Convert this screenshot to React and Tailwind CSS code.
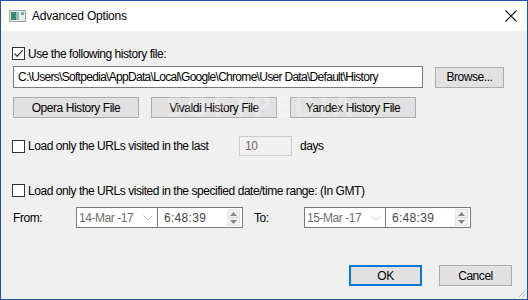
import React from 'react';

const font = { fontFamily: '"Liberation Sans", Arial, sans-serif' };

function Check({ checked }) {
  return (
    <span className="w-[13px] h-[13px] border border-[#333] bg-white flex items-center justify-center shrink-0">
      {checked && (
        <svg width="11" height="11" viewBox="0 0 11 11">
          <path d="M1.5 5.5 L4.2 8.3 L9.6 2.2" fill="none" stroke="#333" strokeWidth="1.2" />
        </svg>
      )}
    </span>
  );
}

function Btn({ children, className = '' }) {
  return (
    <div className={`h-[21px] bg-[#e1e1e1] border border-[#adadad] flex items-center justify-center text-black whitespace-nowrap ${className}`}>
      {children}
    </div>
  );
}

function DateTime({ date }) {
  return (
    <div className="flex h-[21px] border border-[#7a7a7a] bg-white">
      <div className="w-[81px] border-r border-[#7a7a7a] flex items-center pl-[2px] pr-[4px] text-[#6d6d6d]">
        <span className="flex-1 whitespace-nowrap">{date}</span>
        <svg width="10" height="6" viewBox="0 0 10 6">
          <path d="M0.5 0.5 L5 5 L9.5 0.5" fill="none" stroke="#c4c4c4" strokeWidth="1" />
        </svg>
      </div>
      <div className="w-[84px] flex items-center pl-[6px] pr-[2px] text-[#444]">
        <span className="flex-1 tracking-[0.3px]">6:48:39</span>
        <div className="w-[13px] h-[17px] flex flex-col bg-[#f0f0f0] border border-[#e3e3e3]">
          <div className="flex-1 flex items-center justify-center border-b border-[#dcdcdc]">
            <svg width="7" height="4" viewBox="0 0 7 4"><path d="M0 4 L3.5 0 L7 4Z" fill="#888" /></svg>
          </div>
          <div className="flex-1 flex items-center justify-center">
            <svg width="7" height="4" viewBox="0 0 7 4"><path d="M0 0 L3.5 4 L7 0Z" fill="#888" /></svg>
          </div>
        </div>
      </div>
    </div>
  );
}

export default function App() {
  return (
    <div className="w-[528px] h-[300px] border border-[#2150a8] flex flex-col relative overflow-hidden text-[12px] leading-[14px] tracking-[-0.45px] text-black" style={font}>
      <div className="h-[30px] bg-white flex items-center pl-[8px] pr-[10px] shrink-0">
        <svg width="17" height="12" viewBox="0 0 17 12" className="mr-[6px]">
          <rect x="0.5" y="0.5" width="16" height="11" fill="#e8ece9" stroke="#9aa3a0" />
          <rect x="2" y="2" width="5" height="8" fill="#3c8a6e" />
          <rect x="7" y="2" width="3" height="8" fill="#9bb7c9" />
          <rect x="12" y="2" width="3" height="3" fill="#6fb89a" />
        </svg>
        <span className="text-[12px] flex-1 tracking-[-0.2px]">Advanced Options</span>
        <svg width="12" height="12" viewBox="0 0 12 12">
          <path d="M0.5 0.5 L11.5 11.5 M11.5 0.5 L0.5 11.5" stroke="#111" strokeWidth="1.1" />
        </svg>
      </div>

      <div className="flex-1 bg-[#f0f0f0] flex flex-col pl-[11px] relative">
        <div className="flex items-center gap-[3px] mt-[16px] h-[13px]">
          <Check checked />
          <span className="whitespace-nowrap">Use the following history file:</span>
        </div>

        <div className="flex items-center mt-[6px]">
          <div className="w-[410px] h-[22px] bg-white border border-[#7a7a7a] ml-[1px] flex items-center pl-[4px] whitespace-nowrap overflow-hidden tracking-[-0.7px]">
            C:\Users\Softpedia\AppData\Local\Google\Chrome\User Data\Default\History
          </div>
          <Btn className="w-[69px] ml-[12px]">Browse...</Btn>
        </div>

        <div className="flex items-center mt-[9px] ml-[1px]">
          <Btn className="w-[126px]">Opera History File</Btn>
          <Btn className="w-[126px] ml-[12px]">Vivaldi History File</Btn>
          <Btn className="w-[126px] ml-[13px]">Yandex History File</Btn>
        </div>

        <div className="flex items-center mt-[18px] h-[20px]">
          <Check />
          <span className="ml-[3px] w-[211px] whitespace-nowrap">Load only the URLs visited in the last</span>
          <div className="w-[53px] h-[20px] border border-[#cccccc] flex items-center pl-[5px] text-[#6d6d6d]">10</div>
          <span className="ml-[8px]">days</span>
        </div>

        <div className="flex items-center gap-[3px] mt-[28px] h-[13px]">
          <Check />
          <span className="whitespace-nowrap">Load only the URLs visited in the specified date/time range: (In GMT)</span>
        </div>

        <div className="flex items-center mt-[10px] ml-[1px]">
          <span className="w-[63px]">From:</span>
          <DateTime date="14-Mar -17" />
          <span className="ml-[11px] w-[50px]">To:</span>
          <DateTime date="15-Mar -17" />
        </div>

        <div className="flex-1" />
        <div className="flex justify-end pr-[15px] mb-[13px] gap-[17px]">
          <div className="w-[73px] h-[21px] bg-[#e1e1e1] border-2 border-[#0078d7] flex items-center justify-center">OK</div>
          <Btn className="w-[73px]">Cancel</Btn>
        </div>

        <svg width="10" height="10" viewBox="0 0 10 10" className="absolute right-[1px] bottom-[1px]">
          <path d="M9 3 L3 9 M9 6 L6 9" stroke="#b8b8b8" strokeWidth="1" />
        </svg>

        <div className="absolute left-[165px] top-[58px] text-[30px] leading-[34px] font-bold tracking-[3px] text-white/25 select-none pointer-events-none" style={{ fontFamily: '"Open Sans", sans-serif' }}>
          SOFTPEDIA
        </div>
      </div>
    </div>
  );
}
